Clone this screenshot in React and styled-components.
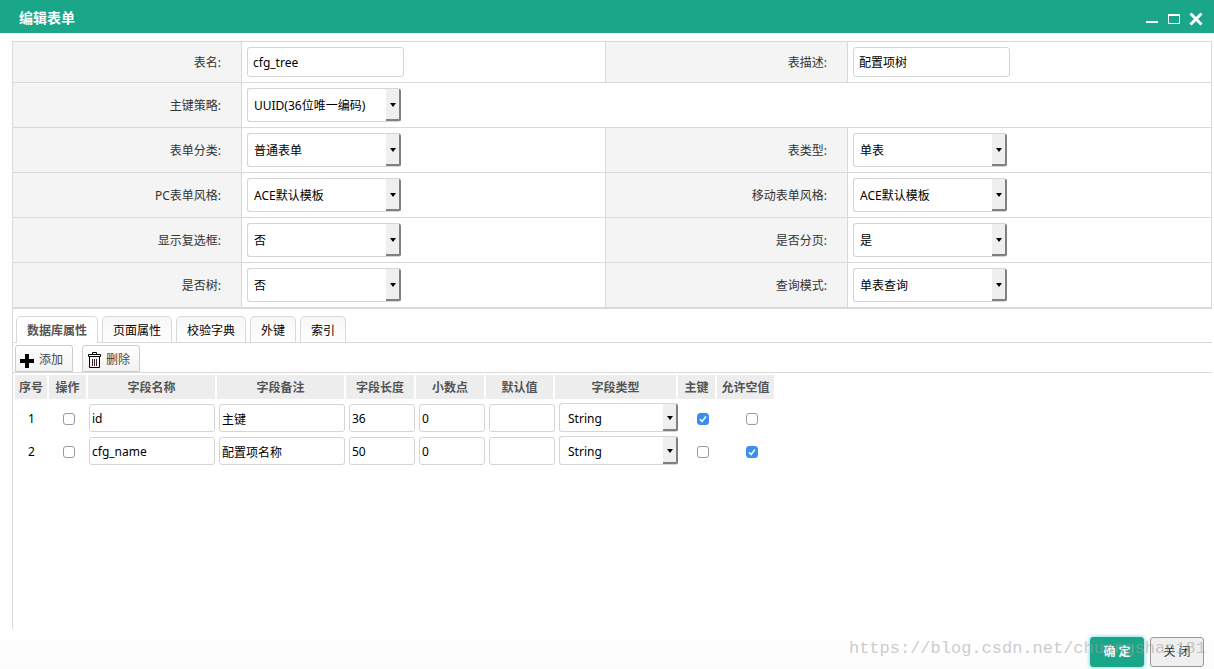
import React, { useState } from 'react';
import styled, { createGlobalStyle, css } from 'styled-components';

const GlobalStyle = createGlobalStyle`
  * {
    box-sizing: border-box;
  }

  body {
    margin: 0;
    background: #fff;
    color: #333;
    font: 12px/18px 'Noto Sans', 'Noto Sans CJK SC', sans-serif;
  }

  button,
  input,
  select {
    margin: 0;
    font: inherit;
    color: #000;
  }
`;

const Dialog = styled.div`
  display: flex;
  flex-direction: column;
  min-height: 100vh;
`;

const TitleBar = styled.header`
  display: flex;
  align-items: center;
  justify-content: space-between;
  height: 33px;
  padding: 2px 11px 0 19px;
  background: #1aa689;
  color: #fff;
`;

const Title = styled.h1`
  margin: 0;
  font-size: 14px;
  line-height: 20px;
  font-weight: bold;
`;

const WindowButtons = styled.div`
  display: flex;
  gap: 8px;
  padding-top: 2px;
`;

const WindowButton = styled.button`
  display: flex;
  width: 14px;
  height: 14px;
  padding: 0;
  border: none;
  background: none;
  cursor: pointer;
`;

const Body = styled.main`
  flex: 1;
  display: flex;
  flex-direction: column;
  margin: 8px 2px 0 12px;
`;

const FormGrid = styled.form`
  display: grid;
  grid-template-columns: 229px 1fr 242px 1fr;
  border: 1px solid #d9d9d9;
  border-right: none;
`;

const LabelCell = styled.label`
  display: flex;
  align-items: center;
  justify-content: flex-end;
  padding: 2px 20px 0 0;
  background: #f4f4f4;
  border-right: 1px solid #d9d9d9;
  border-bottom: 1px solid #d9d9d9;
`;

const FieldCell = styled.div`
  grid-column: ${(props) => (props.$wide ? 'span 3' : 'auto')};
  padding: 5px;
  border-right: 1px solid #d9d9d9;
  border-bottom: 1px solid #d9d9d9;
`;

const TextInput = styled.input`
  display: block;
  width: ${(props) => props.$width}px;
  height: ${(props) => (props.$compact ? 28 : 30)}px;
  padding: ${(props) => (props.$compact ? '2px 2px 0' : '0 5px')};
  border: 1px solid #d5d5d5;
  border-radius: 3px;
  background: #fff;
`;

const SelectBox = styled.div`
  display: grid;
  grid-template-columns: 1fr 15px;
  width: ${(props) => props.$width}px;
  height: ${(props) => (props.$compact ? 29 : 34)}px;
  border: 1px solid #d5d5d5;
  border-right: none;
  border-radius: 3px;
  background: #fff;
`;

const Select = styled.select`
  grid-area: 1 / 1 / 2 / 3;
  appearance: none;
  width: 100%;
  padding: 2px 16px 0 ${(props) => (props.$compact ? 8 : 6)}px;
  border: none;
  background: transparent;
`;

const SelectArrow = styled.span`
  grid-area: 1 / 2;
  display: flex;
  align-items: center;
  justify-content: center;
  border-right: 2px solid #808080;
  border-bottom: 2px solid #808080;
  border-radius: 0 2px 2px 0;
  background: #efefef;
  pointer-events: none;

  &::after {
    content: '';
    margin-top: 2px;
    border: 3px solid transparent;
    border-top: 4px solid #000;
    border-bottom: none;
  }
`;

const Panel = styled.section`
  flex: 1;
  padding-top: 7px;
  border-left: 1px solid #d9d9d9;
`;

const Tabs = styled.div`
  display: flex;
  gap: 4px;
  height: 27px;
  padding-left: 3px;
  border-bottom: 1px solid #d9d9d9;
`;

const Tab = styled.button`
  height: 26px;
  padding: 2px 10px 0;
  border: 1px solid #d9d9d9;
  border-bottom: none;
  border-radius: 5px 5px 0 0;
  background: linear-gradient(#f7f7f7, #fff);
  cursor: pointer;

  ${(props) =>
    props.$active &&
    css`
      height: 27px;
      background: #fff;
      color: #555;
      font-weight: bold;
    `}
`;

const Toolbar = styled.div`
  display: flex;
  gap: 9px;
  padding: 2px 2px 0;
  border-bottom: 1px solid #d9d9d9;
`;

const ToolButton = styled.button`
  display: flex;
  align-items: center;
  gap: 4px;
  width: 58px;
  height: 27px;
  padding: 3px 0 0 4px;
  border: 1px solid #ccc;
  border-radius: 3px 3px 0 0;
  background: linear-gradient(#fff, #f2f2f2);
  color: #444;
  white-space: nowrap;
  cursor: pointer;
`;

const HeadTable = styled.table`
  width: 763px;
  table-layout: fixed;
  border-collapse: separate;
  border-spacing: 2px;
`;

const HeadCell = styled.th`
  width: ${(props) => props.$width}px;
  height: 24px;
  padding: 2px 0 0;
  background: #ededed;
  color: #555;
  font-weight: bold;
  white-space: nowrap;
`;

const BodyTable = styled.table`
  width: 765px;
  table-layout: fixed;
  border-collapse: collapse;
`;

const Cell = styled.td`
  width: ${(props) => props.$width}px;
  height: 33px;
  padding: ${(props) => (props.$plain ? '4px 2px 2px' : '2px')};
  color: #000;
  text-align: center;
`;

const Checkbox = styled.input`
  display: block;
  width: 12px;
  height: 12px;
  margin: 0 auto;
  appearance: none;
  border: 1px solid #999;
  border-radius: 3px;
  background: #fff;

  &:checked {
    border-color: #3b8eed;
    background: #3b8eed
      url("data:image/svg+xml,%3Csvg xmlns='http://www.w3.org/2000/svg' viewBox='0 0 10 10'%3E%3Cpath d='M2 5.2l2.1 2.3L8 2.4' fill='none' stroke='white' stroke-width='1.5'/%3E%3C/svg%3E");
  }
`;

const Footer = styled.footer`
  position: relative;
  display: flex;
  align-items: center;
  justify-content: flex-end;
  gap: 6px;
  height: 40px;
  padding: 8px 10px 2px;
  background: linear-gradient(#fff, #fcfcfc);
`;

const FooterButton = styled.button`
  width: 54px;
  height: 30px;
  padding: 0;
  border: 1px solid #999;
  border-radius: 3px;
  background: #efefef;
  color: #333;
  cursor: pointer;

  ${(props) =>
    props.$primary &&
    css`
      border-color: #1aa689;
      background: #1aa689;
      box-shadow: 0 0 4px #5ccbe0;
      color: #fff;
      font-weight: bold;
    `}
`;

const Watermark = styled.span`
  position: absolute;
  right: 8px;
  top: 10px;
  color: rgba(160, 160, 160, 0.55);
  font: 17px/20px 'Liberation Mono', monospace;
  pointer-events: none;
`;

const fields = [
  { id: 'name', label: '表名', value: 'cfg_tree', text: true },
  { id: 'desc', label: '表描述', value: '配置项树', text: true },
  { id: 'key', label: '主键策略', value: 'UUID(36位唯一编码)', wide: true },
  { id: 'category', label: '表单分类', value: '普通表单' },
  { id: 'type', label: '表类型', value: '单表' },
  { id: 'pcStyle', label: 'PC表单风格', value: 'ACE默认模板' },
  { id: 'mobileStyle', label: '移动表单风格', value: 'ACE默认模板' },
  { id: 'checkbox', label: '显示复选框', value: '否' },
  { id: 'paging', label: '是否分页', value: '是' },
  { id: 'tree', label: '是否树', value: '否' },
  { id: 'query', label: '查询模式', value: '单表查询' },
];

const tabs = ['数据库属性', '页面属性', '校验字典', '外键', '索引'];

const columns = [
  { title: '序号', width: 32 },
  { title: '操作', width: 37 },
  { title: '字段名称', width: 127 },
  { title: '字段备注', width: 127 },
  { title: '字段长度', width: 68 },
  { title: '小数点', width: 68 },
  { title: '默认值', width: 67 },
  { title: '字段类型', width: 121 },
  { title: '主键', width: 37 },
  { title: '允许空值', width: 57 },
];

const rows = [
  { name: 'id', note: '主键', length: '36', primary: true, nullable: false },
  { name: 'cfg_name', note: '配置项名称', length: '50', primary: false, nullable: true },
];

function DropDown({ value, width, compact, ...rest }) {
  return (
    <SelectBox $width={width} $compact={compact}>
      <Select $compact={compact} defaultValue={value} {...rest}>
        <option>{value}</option>
      </Select>
      <SelectArrow />
    </SelectBox>
  );
}

function PlusIcon() {
  return (
    <svg width="15" height="15" viewBox="0 0 15 15" aria-hidden="true">
      <path d="M5 1h4v5h5v4H9v5H5v-5H0V6h5z" fill="#000" />
    </svg>
  );
}

function TrashIcon() {
  return (
    <svg width="15" height="17" viewBox="0 0 15 17" fill="none" stroke="#000" aria-hidden="true">
      <path d="M5.500 2.500v-2h4v2M1.500 2.500h12v2h-12zM2.500 4.500v11h10v-11" />
      <path d="M5.500 7v7M7.500 7v7M9.500 7v7" stroke="#422" />
    </svg>
  );
}

function FieldRow({ row, index }) {
  return (
    <tr>
      <Cell $plain $width={37}>{index + 1}</Cell>
      <Cell $plain $width={37}>
        <Checkbox type="checkbox" aria-label="操作" />
      </Cell>
      <Cell $width={130}>
        <TextInput $compact $width={126} defaultValue={row.name} aria-label="字段名称" />
      </Cell>
      <Cell $width={130}>
        <TextInput $compact $width={126} defaultValue={row.note} aria-label="字段备注" />
      </Cell>
      <Cell $width={70}>
        <TextInput $compact $width={66} defaultValue={row.length} aria-label="字段长度" />
      </Cell>
      <Cell $width={70}>
        <TextInput $compact $width={66} defaultValue="0" aria-label="小数点" />
      </Cell>
      <Cell $width={70}>
        <TextInput $compact $width={66} defaultValue="" aria-label="默认值" />
      </Cell>
      <Cell $width={123}>
        <DropDown compact width={119} value="String" aria-label="字段类型" />
      </Cell>
      <Cell $plain $width={46}>
        <Checkbox type="checkbox" defaultChecked={row.primary} aria-label="主键" />
      </Cell>
      <Cell $plain $width={52}>
        <Checkbox type="checkbox" defaultChecked={row.nullable} aria-label="允许空值" />
      </Cell>
    </tr>
  );
}

function App() {
  const [activeTab, setActiveTab] = useState(0);

  return (
    <Dialog>
      <GlobalStyle />
      <TitleBar>
        <Title>编辑表单</Title>
        <WindowButtons>
          <WindowButton aria-label="最小化">
            <svg width="14" height="14" viewBox="0 0 14 14">
              <path d="M1 9h12v2H1z" fill="#fff" />
            </svg>
          </WindowButton>
          <WindowButton aria-label="最大化">
            <svg width="14" height="14" viewBox="0 0 14 14" fill="none" stroke="#fff">
              <path d="M1.500 2.500h11v9h-11z" />
              <path d="M1 3h12" strokeWidth="2" />
            </svg>
          </WindowButton>
          <WindowButton aria-label="关闭窗口">
            <svg width="14" height="14" viewBox="0 0 14 14" stroke="#fff" strokeWidth="3">
              <path d="M1.500 1.500l11 11M12.500 1.500l-11 11" />
            </svg>
          </WindowButton>
        </WindowButtons>
      </TitleBar>

      <Body>
        <FormGrid>
          {fields.map((field) => (
            <React.Fragment key={field.id}>
              <LabelCell htmlFor={field.id}>{field.label}:</LabelCell>
              <FieldCell $wide={field.wide}>
                {field.text ? (
                  <TextInput id={field.id} $width={157} defaultValue={field.value} />
                ) : (
                  <DropDown id={field.id} width={154} value={field.value} />
                )}
              </FieldCell>
            </React.Fragment>
          ))}
        </FormGrid>

        <Panel>
          <Tabs role="tablist">
            {tabs.map((tab, index) => (
              <Tab
                key={tab}
                role="tab"
                aria-selected={index === activeTab}
                $active={index === activeTab}
                onClick={() => setActiveTab(index)}
              >
                {tab}
              </Tab>
            ))}
          </Tabs>
          <Toolbar>
            <ToolButton>
              <PlusIcon />
              添加
            </ToolButton>
            <ToolButton>
              <TrashIcon />
              删除
            </ToolButton>
          </Toolbar>
          <HeadTable>
            <thead>
              <tr>
                {columns.map((column) => (
                  <HeadCell key={column.title} $width={column.width}>
                    {column.title}
                  </HeadCell>
                ))}
              </tr>
            </thead>
          </HeadTable>
          <BodyTable>
            <tbody>
              {rows.map((row, index) => (
                <FieldRow key={row.name} row={row} index={index} />
              ))}
            </tbody>
          </BodyTable>
        </Panel>
      </Body>

      <Footer>
        <FooterButton $primary>确 定</FooterButton>
        <FooterButton>关 闭</FooterButton>
        <Watermark>https://blog.csdn.net/chuangshan181</Watermark>
      </Footer>
    </Dialog>
  );
}

export default App;
